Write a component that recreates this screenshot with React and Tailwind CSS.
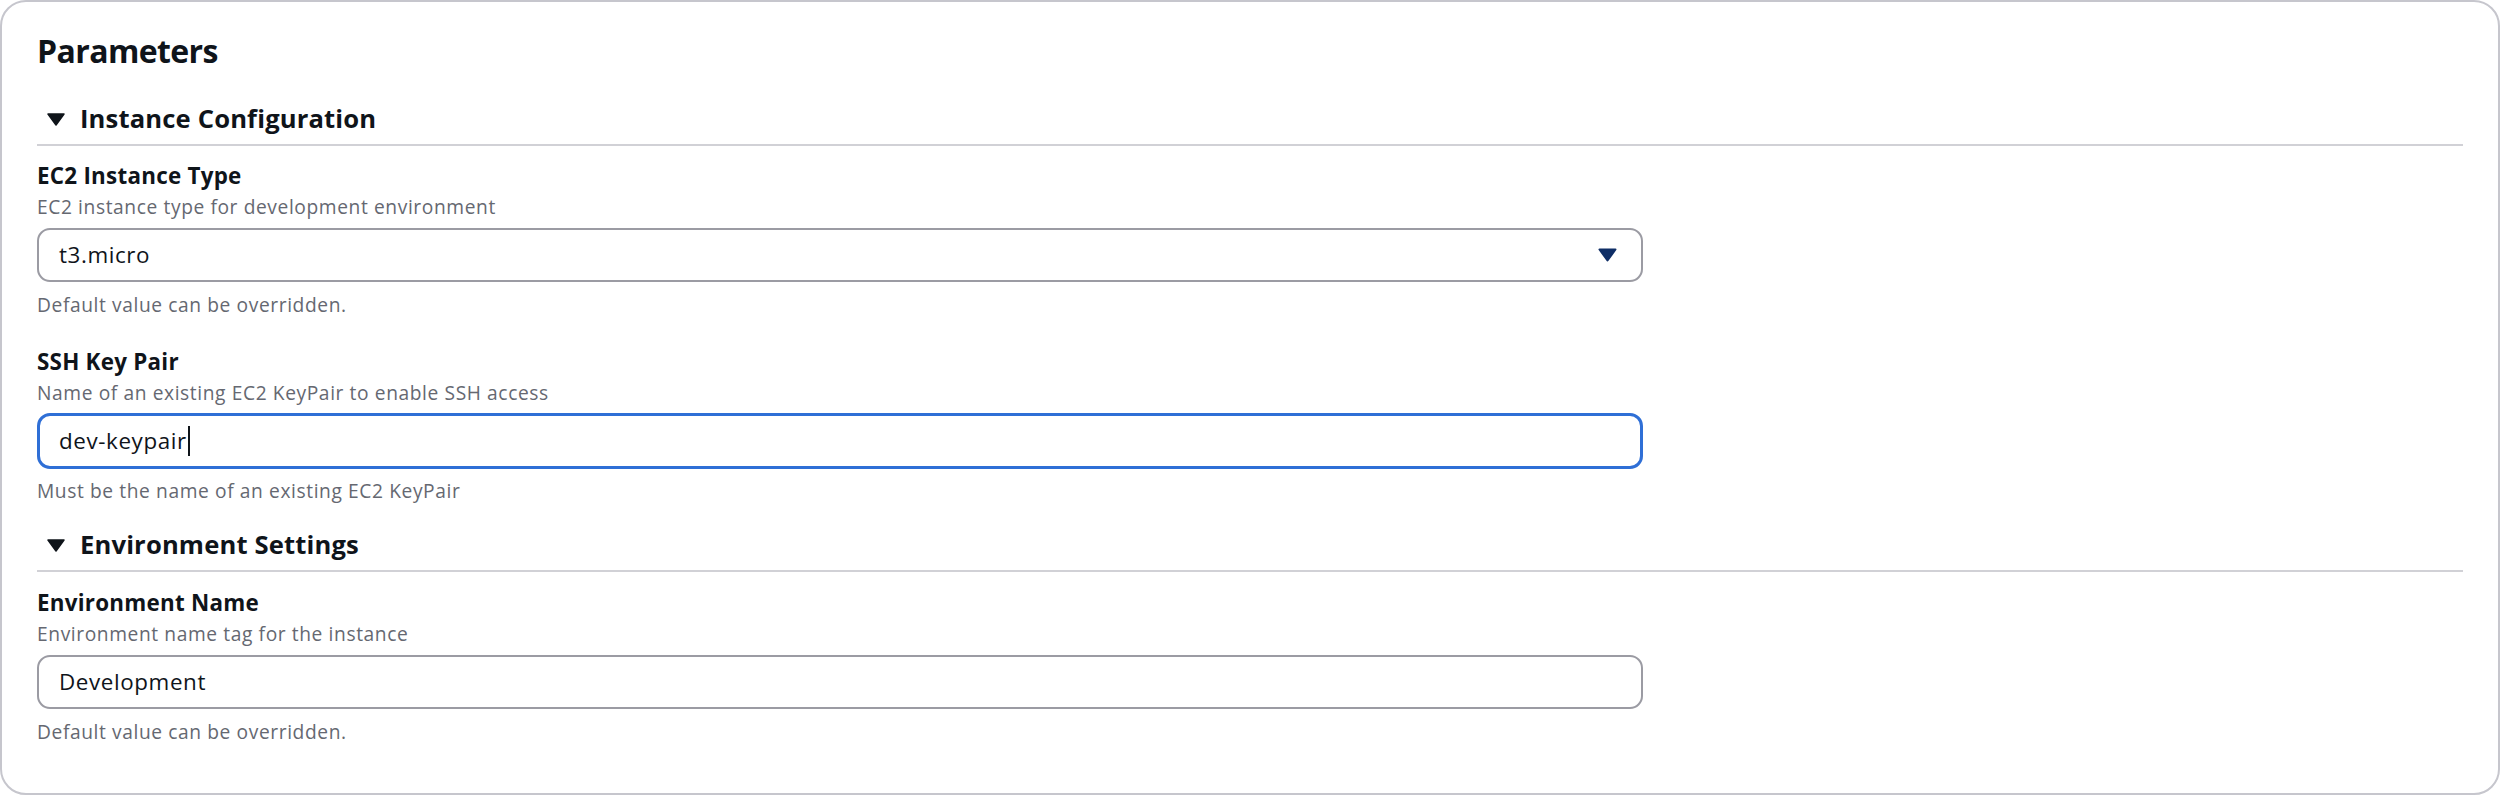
import React from 'react';

const font = { fontFamily: '"Open Sans", "Noto Sans", Arial, sans-serif' };

const Caret = ({ className }) => (
  <svg width="19" height="14" viewBox="0 0 19 14" className={className}>
    <path d="M1.5 1.5 L17.5 1.5 L9.5 12.5 Z" fill="currentColor" stroke="currentColor" strokeWidth="2" strokeLinejoin="round" />
  </svg>
);

const SectionHeader = ({ title, className = '' }) => (
  <div className={`border-b-2 border-[#d1d1d6] pb-[9px] ${className}`}>
    <div className="flex items-center gap-[15px] pl-[10px]">
      <svg width="18" height="13" viewBox="0 0 18 13" className="text-[#0f141a]">
        <path d="M1 1 L17 1 L9 12 Z" fill="currentColor" stroke="currentColor" strokeWidth="1.5" strokeLinejoin="round" />
      </svg>
      <h3 className="text-[25.6px] leading-[32px] font-bold tracking-[0.15px] text-[#0f141a]">{title}</h3>
    </div>
  </div>
);

const Field = ({ label, description, constraint, children, className = '' }) => (
  <div className={className}>
    <label className="block text-[22.4px] leading-[32px] font-bold tracking-[0.25px] text-[#0f141a]">{label}</label>
    <p className="mt-[2px] text-[19.2px] leading-[25.6px] tracking-[0.6px] text-[#656871]">{description}</p>
    <div className="mt-[8px]">{children}</div>
    <p className="mt-[10px] text-[19.2px] leading-[25.6px] tracking-[0.6px] text-[#656871]">{constraint}</p>
  </div>
);

export default function App() {
  return (
    <div className="w-[2500px] h-[795px] bg-white" style={font}>
      <div className="h-[795px] rounded-[26px] border-2 border-[#c6c6cd] bg-white px-[35px] pt-[29px]">
        <h2 className="text-[32px] leading-[40px] font-bold tracking-[-0.6px] text-[#0f141a]">Parameters</h2>

        <SectionHeader title="Instance Configuration" className="mt-[32px]" />

        <Field
          className="mt-[14px]"
          label="EC2 Instance Type"
          description="EC2 instance type for development environment"
          constraint="Default value can be overridden."
        >
          <div className="w-[1606px] h-[54px] rounded-[13px] border-2 border-[#9b9ba3] flex items-center justify-between pl-[20px] pr-[24px]">
            <span className="text-[22.4px] leading-[32px] tracking-[0.6px] text-[#0f141a]">t3.micro</span>
            <Caret className="text-[#0f2e66]" />
          </div>
        </Field>

        <Field
          className="mt-[29px]"
          label="SSH Key Pair"
          description="Name of an existing EC2 KeyPair to enable SSH access"
          constraint="Must be the name of an existing EC2 KeyPair"
        >
          <div className="w-[1606px] h-[56px] -my-[1px] rounded-[13px] border-[3px] border-[#2f6fd6] flex items-center pl-[19px]">
            <span className="text-[22.4px] leading-[32px] tracking-[0.6px] text-[#0f141a]">dev-keypair</span>
            <span className="ml-[1px] w-[2px] h-[30px] bg-[#0f141a]" />
          </div>
        </Field>

        <SectionHeader title="Environment Settings" className="mt-[26px]" />

        <Field
          className="mt-[15px]"
          label="Environment Name"
          description="Environment name tag for the instance"
          constraint="Default value can be overridden."
        >
          <div className="w-[1606px] h-[54px] rounded-[13px] border-2 border-[#9b9ba3] flex items-center pl-[20px]">
            <span className="text-[22.4px] leading-[32px] tracking-[0.6px] text-[#0f141a]">Development</span>
          </div>
        </Field>
      </div>
    </div>
  );
}
